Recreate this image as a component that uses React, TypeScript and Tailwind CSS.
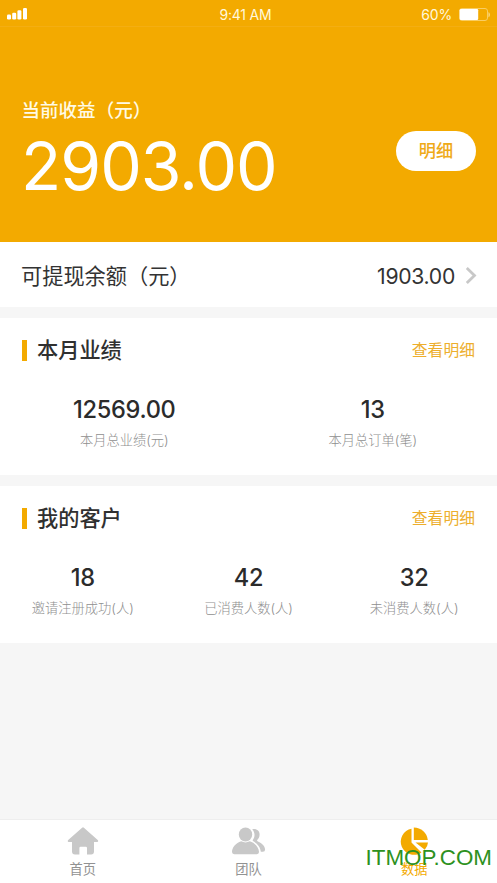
import React from "react";

type Stat = { value: string; label: string };

function StatusBar() {
  return (
    <div className="grid h-[27px] grid-cols-3 items-center border-b border-[#f4ae12] pt-[2px] pr-[6px] pl-[7px] text-[14px] leading-[24px] text-[#fff8dc]">
      <svg width="21" height="14" viewBox="0 0 21 14" fill="#fff">
        <rect x="0" y="6.5" width="4" height="5" rx="1.3" />
        <rect x="5.2" y="4.8" width="4" height="6.7" rx="1.3" />
        <rect x="10.4" y="2.3" width="4" height="9.2" rx="1.3" />
        <rect x="16" y="0" width="4" height="11.5" rx="1.3" />
      </svg>
      <span className="pr-[7px] text-center tracking-[-0.2px]">9:41 AM</span>
      <div className="flex items-center justify-end gap-[7px]">
        <span className="pt-px tracking-[-0.2px]">60%</span>
        <svg width="32" height="14" viewBox="0 0 32 14">
          <rect x="0.5" y="0.5" width="28" height="12" rx="2.500" fill="none" stroke="#f9cd62" strokeWidth="1" />
          <rect x="0.700" y="1" width="18.500" height="11" rx="1.200" fill="#fff" />
          <path d="M29.500 4.200c1.800.5 1.800 4.500 0 5z" fill="#fbdc8d" />
        </svg>
      </div>
    </div>
  );
}

function StatCard({ title, stats, columns }: { title: string; stats: Stat[]; columns: string }) {
  return (
    <section className="mt-[11px] h-[157px] bg-white">
      <div className="flex h-[64px] items-center justify-between px-[22px]">
        <div className="flex items-center gap-[10px]">
          <span className="h-[21px] w-[5px] bg-[#f3aa00]" />
          <h2 className="text-[21.2px] leading-[32px] font-medium text-[#303030]">{title}</h2>
        </div>
        <a className="pt-[2px] text-[15.8px] leading-[24px] text-[#edae2c]">查看明细</a>
      </div>
      <div className={"grid pt-[11px] text-center " + columns}>
        {stats.map((s) => (
          <div key={s.label}>
            <div className="text-[23.6px] leading-[34px] font-medium tracking-[-0.3px] text-[#2b2b2b]">{s.value}</div>
            <div className="mt-[3px] text-[13.25px] leading-[20px] font-light text-[#8f8f8f]">{s.label}</div>
          </div>
        ))}
      </div>
    </section>
  );
}

function HomeIcon() {
  return (
    <svg width="32" height="28" viewBox="0 0 32 28" fill="#c8c8c8">
      <path d="M15.1.7a1.3 1.3 0 0 1 1.8 0L30.7 13c1 .9.3 2-.8 2H27v9.600q0 2.900-2.900 2.900H20V21q0-1.200-1.200-1.200h-5.200q-1.200 0-1.200 1.200v6.500H8q-3 0-3-2.900V15H2c-1.200 0-1.700-1.200-.8-2z" />
    </svg>
  );
}

function TeamIcon() {
  return (
    <svg width="34" height="28" viewBox="0 0 34 28" fill="#c8c8c8" className="translate-x-px">
      <ellipse cx="13.500" cy="7.500" rx="6.700" ry="7" />
      <path d="M9.200 14.300q4.300 2.200 8.600 0c5.300 1.700 9.200 6.300 9.200 10.800q0 2.100-2.100 2.100H2.200Q0 27.200 0 25.100c0-4.500 3.900-9.100 9.200-10.800z" />
      <path d="M20.200 2.300c4.200-1.100 7.400 1.600 7.400 5.100 0 3.100-1.500 4.600-2.200 5.300-.7.800-.3 1.400.5 1.700 4.200 1.600 7.200 4.900 7.200 8.200q0 2.200-2.200 2.200h-2.100c-.2-4.300-3.300-8.300-7.800-10.700-.5-.4-.4-.9 0-1.400 2.200-2.700 2.100-7.500-.8-10.400z" />
    </svg>
  );
}

function DataIcon() {
  return (
    <svg width="30" height="29" viewBox="0 0 30 29" fill="#f3aa00">
      <path d="M12.500 1.700A13.200 13.200 0 1 0 22.500 25.500L12.500 15.500z" />
      <path d="M14.800.5a14 14 0 0 1 14 12.500H14.800z" />
      <path d="M16.500 15.600h12.500q-.2 3.900-3.200 7.200z" />
    </svg>
  );
}

function TabItem({ icon, label, active = false }: { icon: React.ReactNode; label: string; active?: boolean }) {
  return (
    <div className={"flex flex-col items-center pt-[7px] text-[13.25px] " + (active ? "text-[#f3aa00]" : "text-[#929292]")}>
      <div className="h-[29px]">{icon}</div>
      <span className="mt-[3px] leading-[20px]">{label}</span>
    </div>
  );
}

export default function App() {
  return (
    <main lang="zh-CN" className="relative flex h-[883px] w-[497px] flex-col overflow-hidden bg-[#f6f6f6] font-['Inter','Noto_Sans_CJK_SC',sans-serif]">
      <header className="h-[242px] bg-[#f3aa00] text-white">
        <StatusBar />
        <div className="flex items-end justify-between pr-[21px] pl-[21px] pt-[68px]">
          <div>
            <p className="pl-[0.5px] font-['Noto_Sans_CJK_SC',sans-serif] text-[18.55px] leading-[28px] font-medium text-[#fffae5]">当前收益（元）</p>
            <p className="mt-[3px] text-[66px] leading-[80px] tracking-[-1px]">2903.00</p>
          </div>
          <button className="mb-[35px] h-[40px] w-[80px] rounded-full bg-white text-[17.2px] leading-[40px] font-medium text-[#efaa18]">明细</button>
        </div>
      </header>
      <section className="flex h-[65px] items-center justify-between bg-white pr-[20px] pl-[21px] text-[21.2px] leading-[32px] text-[#333]">
        <span className="font-['Noto_Sans_CJK_SC',sans-serif]">可提现余额（元）</span>
        <div className="flex items-center gap-[10px] pt-[2px]">
          <span className="tracking-[-0.3px]">1903.00</span>
          <svg width="12" height="18" viewBox="0 0 12 18" fill="none" stroke="#c8c8c8" strokeWidth="2.800">
            <path d="M1.800 1 9.500 8.500 1.800 16" />
          </svg>
        </div>
      </section>
      <StatCard
        title="本月业绩"
        columns="grid-cols-2"
        stats={[
          { value: "12569.00", label: "本月总业绩(元)" },
          { value: "13", label: "本月总订单(笔)" },
        ]}
      />
      <StatCard
        title="我的客户"
        columns="grid-cols-3"
        stats={[
          { value: "18", label: "邀请注册成功(人)" },
          { value: "42", label: "已消费人数(人)" },
          { value: "32", label: "未消费人数(人)" },
        ]}
      />
      <nav className="mt-auto grid h-[64px] grid-cols-3 border-t border-[#eeeeee] bg-white">
        <TabItem icon={<HomeIcon />} label="首页" />
        <TabItem icon={<TeamIcon />} label="团队" />
        <TabItem icon={<DataIcon />} label="数据" active />
      </nav>
      <span className="absolute right-[5px] bottom-[13px] font-['Liberation_Sans',sans-serif] text-[22.400px] leading-[24px] text-[#2d9120]">ITMOP.COM</span>
    </main>
  );
}
